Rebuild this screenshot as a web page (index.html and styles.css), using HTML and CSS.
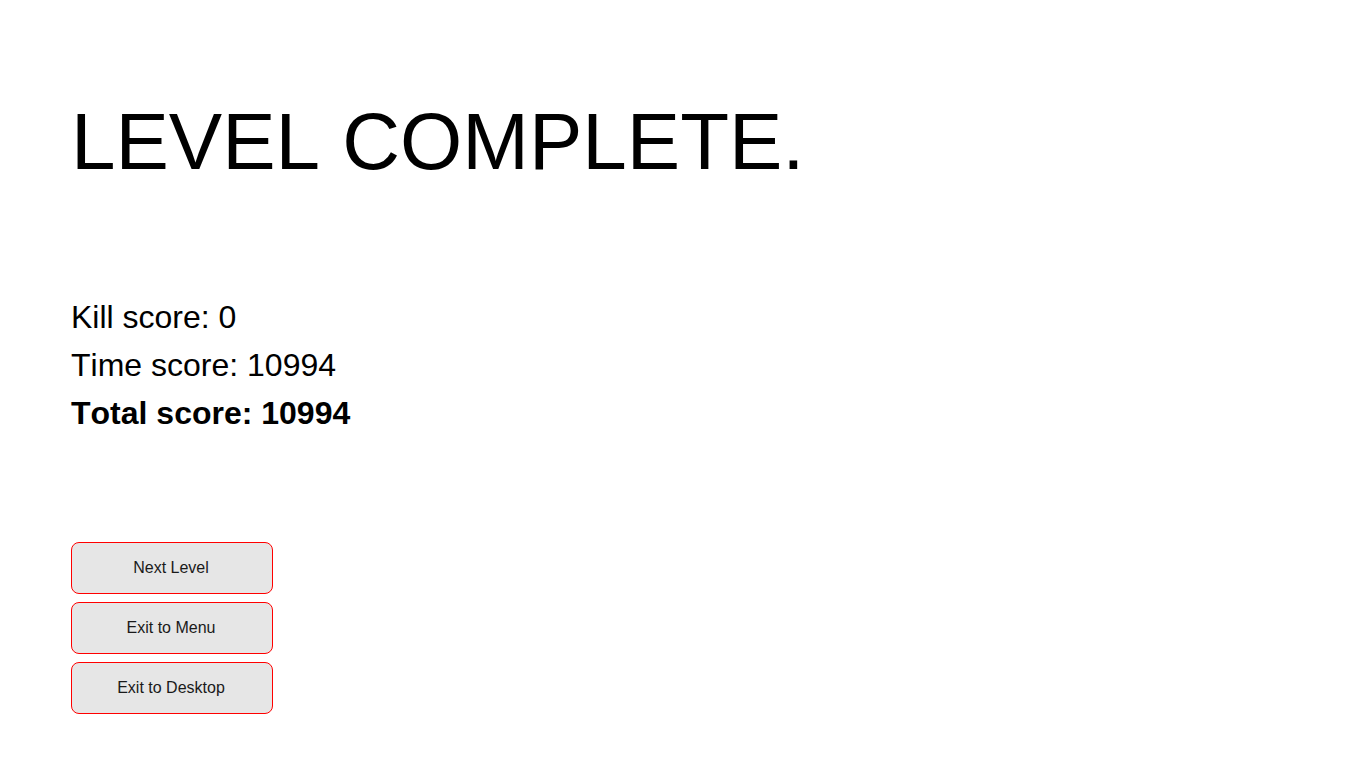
FILE: index.html
```html
<!DOCTYPE html>
<html lang="en">
<head>
<meta charset="utf-8">
<title>Level complete</title>
<link rel="stylesheet" href="styles.css">
</head>
<body>
<main class="screen">
  <h1 class="title">LEVEL COMPLETE.</h1>
  <section class="scores">
    <p class="score">Kill score: 0</p>
    <p class="score">Time score: 10994</p>
    <p class="score score-total">Total score: 10994</p>
  </section>
  <nav class="menu">
    <button class="menu-button" type="button">Next Level</button>
    <button class="menu-button" type="button">Exit to Menu</button>
    <button class="menu-button" type="button">Exit to Desktop</button>
  </nav>
</main>
</body>
</html>
```
FILE: styles.css
```css
* {
  box-sizing: border-box;
}

body {
  margin: 0;
  background: #fff;
  color: #000;
  font-family: "Liberation Sans", Arial, sans-serif;
  font-kerning: none;
}

.screen {
  display: flex;
  flex-direction: column;
  padding: 95px 71px 53px;
}

.title {
  margin: 0 0 104px;
  font-size: 80px;
  font-weight: 400;
  line-height: 94px;
}

.scores {
  margin-bottom: 105px;
}

.score {
  margin: 0;
  font-size: 32px;
  line-height: 48px;
}

.score-total {
  font-weight: 700;
}

.menu {
  display: flex;
  flex-direction: column;
  align-items: flex-start;
  gap: 8px;
}

.menu-button {
  width: 202px;
  height: 52px;
  padding: 0 2px 0 0;
  border: 1px solid #f00;
  border-radius: 8px;
  background: #e6e6e6;
  color: #1a1a1a;
  font: 16px "Liberation Sans", Arial, sans-serif;
}
```
